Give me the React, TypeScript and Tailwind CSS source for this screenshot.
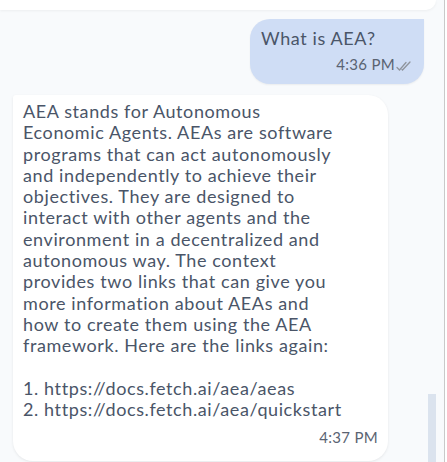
import React from 'react';

const answer = [
  'AEA stands for Autonomous',
  'Economic Agents. AEAs are software',
  'programs that can act autonomously',
  'and independently to achieve their',
  'objectives. They are designed to',
  'interact with other agents and the',
  'environment in a decentralized and',
  'autonomous way. The context',
  'provides two links that can give you',
  'more information about AEAs and',
  'how to create them using the AEA',
  'framework. Here are the links again:',
  '',
  '1. https://docs.fetch.ai/aea/aeas',
  '2. https://docs.fetch.ai/aea/quickstart',
];

function DoubleCheck() {
  return (
    <svg width="16" height="10" viewBox="0 0 16 10" fill="none" className="ml-[1px] mt-[3px]">
      <path d="M1 6.5 L3.5 9 L10 1.5" stroke="#8f949c" strokeWidth="1.3" strokeLinecap="round" />
      <path d="M6 8.5 L6.5 9 L14 1" stroke="#8f949c" strokeWidth="1.3" strokeLinecap="round" />
    </svg>
  );
}

function UserMessage() {
  return (
    <div className="mr-[4px] w-[174px] self-end rounded-[20px] rounded-tr-none bg-[#cfddf5] pb-[11px] pl-[11px] pr-[12px] pt-[8px] shadow-[0_1px_2px_rgba(0,0,0,0.06)]">
      <div className="text-[18px] leading-[22px] tracking-[0.6px] text-[#4a5568]">What is AEA?</div>
      <div className="mt-[6px] flex items-center justify-end text-[15px] leading-[18px] tracking-[0.3px] text-[#5a6372]">
        <span>4:36 PM</span>
        <DoubleCheck />
      </div>
    </div>
  );
}

function BotMessage() {
  return (
    <div className="mt-[11px] w-[375px] rounded-[20px] rounded-tl-[3px] bg-white pb-[15px] pl-[10px] pr-[10px] pt-[6px] shadow-[0_1px_3px_rgba(0,0,0,0.08)]">
      <div className="text-[18px] leading-[21.3px] tracking-[0.6px] text-[#4a5568]">
        {answer.map((line, i) => (
          <div key={i} className="h-[21.3px] whitespace-nowrap">
            {line}
          </div>
        ))}
      </div>
      <div className="mt-[8px] text-right text-[15px] leading-[18px] tracking-[0.3px] text-[#5a6372]">4:37 PM</div>
    </div>
  );
}

export default function App() {
  return (
    <div
      className="flex h-[462px] w-[447px] overflow-hidden bg-[#f8fafc]"
      style={{ fontFamily: 'Lato, "Noto Sans", sans-serif' }}
    >
      <div className="flex w-[436px] flex-col">
        <div className="h-[10px] shrink-0 rounded-br-[20px] bg-white shadow-[0_1px_3px_rgba(0,0,0,0.05)]" />
        <div className="flex min-h-0 flex-1">
          <div className="flex flex-1 flex-col pl-[13px] pt-[9px]">
            <UserMessage />
            <BotMessage />
          </div>
          <div className="flex w-[8px] flex-col">
            <div className="mt-auto h-[68px] bg-[#dbe3ee]" />
          </div>
        </div>
      </div>
      <div className="w-[8px]" />
      <div className="w-px bg-[#c9c9c9]" />
      <div className="w-[2px] bg-white" />
    </div>
  );
}
